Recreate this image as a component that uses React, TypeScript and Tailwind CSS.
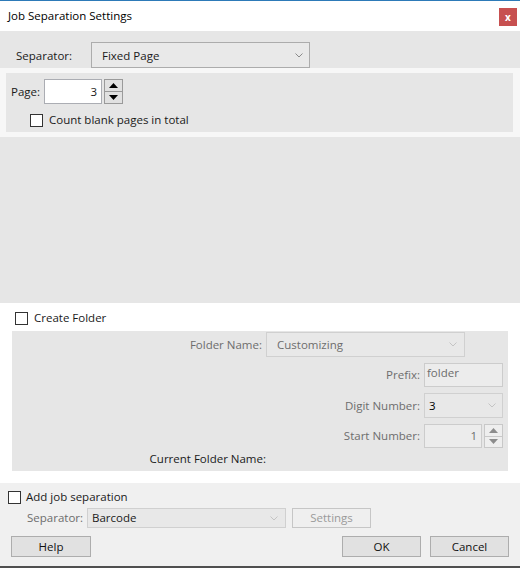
import type { ReactNode } from "react";

const FONT = "font-['Open_Sans','Noto_Sans',sans-serif]";

function Chevron({ faded }: { faded?: boolean }) {
  return (
    <svg width="8" height="5" viewBox="0 0 8 5" aria-hidden="true">
      <polyline
        points="0.5,0.5 4,4 7.5,0.5"
        fill="none"
        stroke={faded ? "#c4c4c4" : "#8a8a8a"}
        strokeWidth="1"
      />
    </svg>
  );
}

function Tri({ up, color }: { up?: boolean; color: string }) {
  return (
    <svg width="9" height="5" viewBox="0 0 9 5" aria-hidden="true">
      <polygon points={up ? "0,5 9,5 4.5,0" : "0,0 9,0 4.5,5"} fill={color} />
    </svg>
  );
}

function Spinner({ disabled }: { disabled?: boolean }) {
  const color = disabled ? "#8c8c8c" : "#000000";
  return (
    <div
      className={
        "flex h-full w-[19px] flex-col border " +
        (disabled ? "border-[#c8c8c8] bg-[#eeeeee]" : "border-[#9a9a9a] bg-[#e1e1e1]")
      }
    >
      <div className="flex flex-1 items-center justify-center">
        <Tri up color={color} />
      </div>
      <div className={"h-px " + (disabled ? "bg-[#c8c8c8]" : "bg-[#9a9a9a]")} />
      <div className="flex flex-1 items-center justify-center">
        <Tri color={color} />
      </div>
    </div>
  );
}

function CheckBox() {
  return <span className="h-[13px] w-[13px] shrink-0 border border-[#333333] bg-white" />;
}

function Button({ children, className }: { children: ReactNode; className?: string }) {
  return (
    <div
      className={
        "flex h-[21px] items-center justify-center border border-[#adadad] bg-[#e1e1e1] text-[#111] " +
        (className ?? "")
      }
    >
      {children}
    </div>
  );
}

export default function App() {
  return (
    <div
      className={`${FONT} flex h-[568px] w-[520px] flex-col overflow-hidden bg-white text-[11.5px] leading-4 text-[#1a1a1a]`}
    >
      {/* title bar */}
      <div className="h-px bg-[#2d7ab8]" />
      <div className="flex h-[30px] items-start justify-between bg-white pl-[8px] pr-[2px]">
        <span className="mt-[7px] text-black">Job Separation Settings</span>
        <div className="mr-px mt-[7px] flex h-[18px] w-[18px] items-center justify-center bg-[#c75050] text-[10px] font-bold text-white">
          x
        </div>
      </div>

      {/* separator row */}
      <div className="flex h-[37px] items-end bg-[#e6e6e6] pl-[16px]">
        <span className="mb-[4px] w-[75px]">Separator:</span>
        <div className="flex h-[26px] w-[219px] items-center justify-between border border-[#acacac] bg-[#e9e9e9] pl-[10px] pr-[6px] pt-px">
          <span>Fixed Page</span>
          <Chevron />
        </div>
      </div>

      {/* page panel */}
      <div className="bg-[#f7f7f7] pb-[5px] pl-[6px] pr-[7px] pt-[5px]">
        <div className="flex h-[59px] flex-col bg-[#e6e6e6] pl-[5px] pt-[6px]">
          <div className="flex h-[25px] items-center">
            <span className="w-[33px]">Page:</span>
            <div className="flex h-full w-[58px] items-center justify-end border border-[#abadb3] bg-white pr-[4px]">
              3
            </div>
            <div className="ml-[2px] h-full">
              <Spinner />
            </div>
          </div>
          <div className="ml-[19px] mt-[8px] flex items-center gap-[6px]">
            <CheckBox />
            <span>Count blank pages in total</span>
          </div>
        </div>
      </div>

      {/* empty area */}
      <div className="h-[166px] bg-[#e6e6e6]" />

      {/* create folder */}
      <div className="flex h-[180px] flex-col bg-white pt-[7px]">
        <div className="ml-[15px] flex items-center gap-[6px]">
          <CheckBox />
          <span>Create Folder</span>
        </div>
        <div className="ml-[12px] mt-[5px] flex h-[140px] w-[496px] flex-col bg-[#e6e6e6] pt-px text-[#6d6d6d]">
          <div className="flex h-[25px] items-center">
            <span className="w-[250px] text-right">Folder Name:</span>
            <div className="ml-[4px] flex h-full w-[199px] items-center justify-between border border-[#d0d0d0] bg-[#e8e8e8] pl-[10px] pr-[7px]">
              <span>Customizing</span>
              <Chevron faded />
            </div>
          </div>
          <div className="mt-[6px] flex h-[24px] items-center">
            <span className="w-[408px] text-right">Prefix:</span>
            <div className="ml-[4px] flex h-full w-[79px] items-start border border-[#cccccc] bg-[#ececec] pl-[2px] pt-px">
              folder
            </div>
          </div>
          <div className="mt-[6px] flex h-[25px] items-center">
            <span className="w-[408px] text-right">Digit Number:</span>
            <div className="ml-[4px] flex h-full w-[79px] items-center justify-between border border-[#d0d0d0] bg-[#e8e8e8] pl-[4px] pr-[6px]">
              <span className="text-black">3</span>
              <Chevron faded />
            </div>
          </div>
          <div className="mt-[6px] flex h-[24px] items-center">
            <span className="w-[408px] text-right">Start Number:</span>
            <div className="ml-[4px] flex h-full w-[58px] items-center justify-end border border-[#cccccc] bg-[#ececec] pr-[4px]">
              1
            </div>
            <div className="ml-[2px] h-full">
              <Spinner disabled />
            </div>
          </div>
          <div className="mt-[3px] flex">
            <span className="w-[254px] text-right text-[#1a1a1a]">Current Folder Name:</span>
          </div>
        </div>
      </div>

      {/* bottom */}
      <div className="flex flex-1 flex-col border-b-2 border-[#4f4f4f] bg-[#f0f0f0] pt-[6px]">
        <div className="ml-[8px] flex items-center gap-[5px]">
          <CheckBox />
          <span>Add job separation</span>
        </div>
        <div className="mt-[3px] flex h-[20px] items-center">
          <span className="ml-[27px] w-[60px] text-[#6d6d6d]">Separator:</span>
          <div className="flex h-full w-[199px] items-center justify-between border border-[#d0d0d0] bg-[#e8e8e8] pl-[4px] pr-[7px]">
            <span>Barcode</span>
            <Chevron faded />
          </div>
          <div className="ml-[6px] flex h-full w-[79px] items-center justify-center border border-[#c6c6c6] bg-[#efefef] text-[#9a9a9a]">
            Settings
          </div>
        </div>
        <div className="mt-[8px] flex items-center pr-[11px]">
          <Button className="ml-[11px] w-[80px]">Help</Button>
          <div className="flex-1" />
          <Button className="w-[79px]">OK</Button>
          <Button className="ml-[9px] w-[79px]">Cancel</Button>
        </div>
      </div>
    </div>
  );
}
